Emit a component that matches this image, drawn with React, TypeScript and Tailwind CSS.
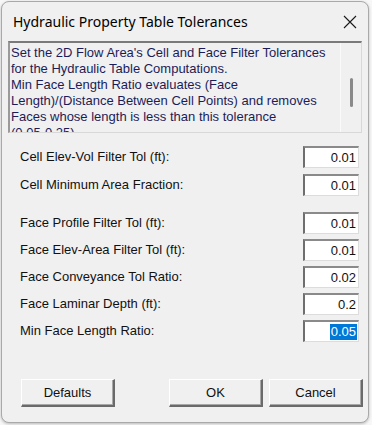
import React from 'react';

const sans = "font-['Liberation_Sans',Arial,sans-serif]";

interface FieldProps {
  label: string;
  value: string;
  selected?: boolean;
}

const Field: React.FC<FieldProps> = ({ label, value, selected }) => (
  <div className="flex h-[22px] items-center justify-between pl-[12px] pr-[3px]">
    <span className="text-[13px] text-[#111]">{label}</span>
    <div className="flex h-[22px] w-[56px] items-center justify-end border-t-2 border-l-2 border-t-[#8a8a8a] border-l-[#6e6e6e] border-r border-b border-r-[#dcdcdc] border-b-[#dcdcdc] bg-white pr-[1px] text-[13px] text-[#111]">
      {selected ? (
        <span className="bg-[#0078d7] px-[1px] leading-[16px] text-white">{value}</span>
      ) : (
        <span className="px-[1px]">{value}</span>
      )}
    </div>
  </div>
);

const Button: React.FC<{ children: React.ReactNode; className?: string }> = ({ children, className }) => (
  <button
    className={`flex h-[28px] w-[94px] items-center justify-center border-t border-l border-t-white border-l-white border-r-2 border-b-2 border-r-[#6a6a6a] border-b-[#6a6a6a] bg-[#f0f0f0] text-[13px] text-[#111] shadow-[inset_-1px_-1px_0_#a8a8a8] ${className ?? ''}`}
  >
    {children}
  </button>
);

export default function App() {
  return (
    <div className={`h-[425px] w-[372px] bg-[#f7f7f7] pt-[1px] pl-[1px] ${sans}`}>
      <div className="h-[422px] w-[368px] overflow-hidden rounded-[8px] border border-[#a9a9a9] bg-[#f0f0f0] shadow-[0_1px_3px_rgba(0,0,0,0.25)]">
        {/* title bar */}
        <div className="flex h-[39px] items-center justify-between pl-[11px] pr-[11px]">
          <span className="font-['Noto_Sans',sans-serif] text-[14px] text-black">
            Hydraulic Property Table Tolerances
          </span>
          <svg width="14" height="14" viewBox="0 0 14 14" className="mt-[1px]">
            <path d="M1 1 L13 13 M13 1 L1 13" stroke="#1a1a1a" strokeWidth="1.1" fill="none" />
          </svg>
        </div>

        {/* description */}
        <div className="mx-[6px] flex h-[92px] overflow-hidden border-t-2 border-l-2 border-t-[#7a7a7a] border-l-[#9a9a9a] border-r border-b border-r-[#d8d8d8] border-b-[#d8d8d8] bg-[#f0f0f0]">
          <div className="flex-1 pl-[1px] pt-[2px] text-[13px] leading-[16px] text-[#1c1c58]">
            Set the 2D Flow Area's Cell and Face Filter Tolerances
            <br />
            for the Hydraulic Table Computations.
            <br />
            Min Face Length Ratio evaluates (Face
            <br />
            Length)/(Distance Between Cell Points) and removes
            <br />
            Faces whose length is less than this tolerance
            <br />
            (0.05-0.25)
          </div>
          <div className="flex w-[21px] justify-center border-l border-l-[#fafafa] bg-[#f0f0f0] pt-[35px]">
            <div className="h-[29px] w-[3px] rounded-full bg-[#8a8a8a]" />
          </div>
        </div>

        {/* fields */}
        <div className="mt-[13px] flex flex-col gap-[6px] pl-[6px] pr-[6px]">
          <Field label="Cell Elev-Vol Filter Tol (ft):" value="0.01" />
          <Field label="Cell Minimum Area Fraction:" value="0.01" />
        </div>
        <div className="mt-[16px] flex flex-col gap-[5px] pl-[6px] pr-[6px]">
          <Field label="Face Profile Filter Tol (ft):" value="0.01" />
          <Field label="Face Elev-Area Filter Tol (ft):" value="0.01" />
          <Field label="Face Conveyance Tol Ratio:" value="0.02" />
          <Field label="Face Laminar Depth (ft):" value="0.2" />
          <Field label="Min Face Length Ratio:" value="0.05" selected />
        </div>

        {/* buttons */}
        <div className="mt-[37px] flex pl-[19px]">
          <Button>Defaults</Button>
          <Button className="ml-[54px]">OK</Button>
          <Button className="ml-[6px]">Cancel</Button>
        </div>
      </div>
    </div>
  );
}
